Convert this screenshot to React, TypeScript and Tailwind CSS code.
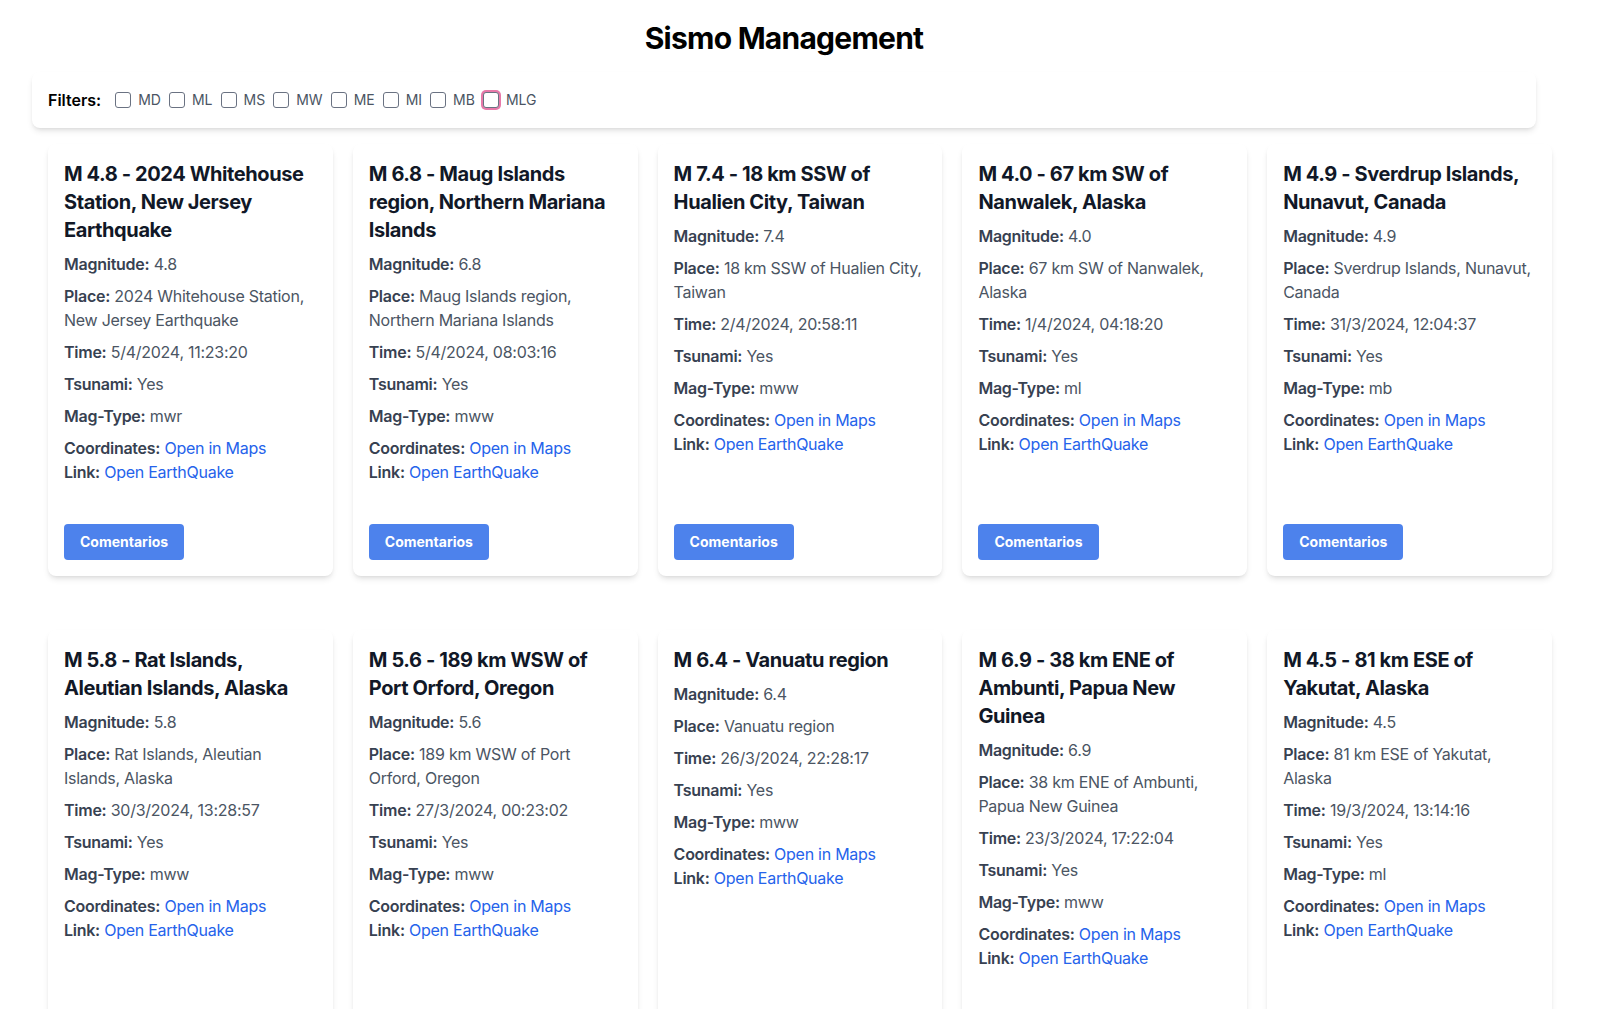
import React from "react";

const quakes = [
  { mag: "4.8", place: "2024 Whitehouse Station, New Jersey Earthquake", time: "5/4/2024, 11:23:20", type: "mwr" },
  { mag: "6.8", place: "Maug Islands region, Northern Mariana Islands", time: "5/4/2024, 08:03:16", type: "mww" },
  { mag: "7.4", place: "18 km SSW of Hualien City, Taiwan", time: "2/4/2024, 20:58:11", type: "mww" },
  { mag: "4.0", place: "67 km SW of Nanwalek, Alaska", time: "1/4/2024, 04:18:20", type: "ml" },
  { mag: "4.9", place: "Sverdrup Islands, Nunavut, Canada", time: "31/3/2024, 12:04:37", type: "mb" },
  { mag: "5.8", place: "Rat Islands, Aleutian Islands, Alaska", time: "30/3/2024, 13:28:57", type: "mww" },
  { mag: "5.6", place: "189 km WSW of Port Orford, Oregon", time: "27/3/2024, 00:23:02", type: "mww" },
  { mag: "6.4", place: "Vanuatu region", time: "26/3/2024, 22:28:17", type: "mww" },
  { mag: "6.9", place: "38 km ENE of Ambunti, Papua New Guinea", time: "23/3/2024, 17:22:04", type: "mww" },
  { mag: "4.5", place: "81 km ESE of Yakutat, Alaska", time: "19/3/2024, 13:14:16", type: "ml" },
];

const filters = ["MD", "ML", "MS", "MW", "ME", "MI", "MB", "MLG"];

function Row({ label, value, last }: { label: string; value: React.ReactNode; last?: boolean }) {
  return (
    <p className={last ? "tracking-[-0.016em]" : "mb-2 tracking-[-0.016em]"}>
      <span className="font-semibold text-[#374151]">{label}:</span>{" "}
      <span className="text-[#4b5563]">{value}</span>
    </p>
  );
}

export default function App() {
  return (
    <main className="min-h-screen bg-white font-['Inter',sans-serif] text-base">
      {/* Header */}
      <div className="pl-8 pr-16 pt-5">
        <h1 className="text-3xl font-bold text-black text-center tracking-tight mb-4">Sismo Management</h1>
        <div className="bg-white rounded-lg shadow-md p-4 flex items-center">
          <span className="font-semibold text-black mr-[14px]">Filters:</span>
          <div className="flex items-center gap-2">
            {filters.map((f) => (
              <label key={f} className="flex items-center gap-[7px] text-sm text-[#4b5563]">
                <input
                  type="checkbox"
                  className={
                    f === "MLG"
                      ? "appearance-none w-4 h-4 border border-gray-500 rounded-[3px] bg-white ring-2 ring-[#e879a9]"
                      : "appearance-none w-4 h-4 border border-gray-500 rounded-[3px] bg-white"
                  }
                />
                {f}
              </label>
            ))}
          </div>
        </div>
      </div>

      {/* Cards */}
      <div className="grid grid-cols-5 gap-x-5 gap-y-[54px] px-12 pt-4 pb-4">
        {quakes.map((q) => (
          <div key={q.place} className="bg-white rounded-lg shadow-md p-4 flex flex-col">
            <h3 className="text-xl font-bold text-[#111827] tracking-[-0.02em] mb-2">
              M {q.mag} - {q.place}
            </h3>
            <Row label="Magnitude" value={q.mag} />
            <Row label="Place" value={q.place} />
            <Row label="Time" value={q.time} />
            <Row label="Tsunami" value="Yes" />
            <Row label="Mag-Type" value={q.type} />
            <Row label="Coordinates" value={<a className="text-[#2563eb]">Open in Maps</a>} last />
            <Row label="Link" value={<a className="text-[#2563eb]">Open EarthQuake</a>} last />
            <div className="mt-auto pt-10">
              <button className="bg-[#4d82ec] text-white text-sm font-bold px-4 py-2 rounded">
                Comentarios
              </button>
            </div>
          </div>
        ))}
      </div>
    </main>
  );
}
